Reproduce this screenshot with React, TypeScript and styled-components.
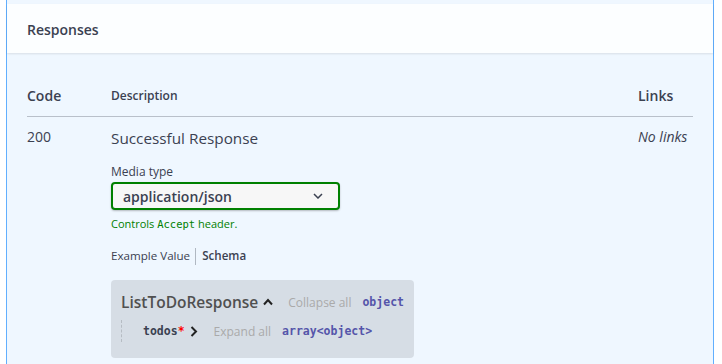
import styled, { createGlobalStyle } from 'styled-components';

const GlobalStyle = createGlobalStyle`
  html, body {
    margin: 0;
    padding: 0;
    background: #ffffff;
  }
  body {
    font-family: "Open Sans", "Noto Sans", sans-serif;
    color: #3b4151;
  }
`;

const mono = `"DejaVu Sans Mono", "Liberation Mono", monospace`;

const Page = styled.div`
  width: 722px;
  height: 364px;
  overflow: hidden;
`;

const Opblock = styled.section`
  margin: 0 8px 0 6px;
  padding-top: 4px;
  border-left: 1px solid #61affe;
  border-right: 1px solid #61affe;
  background: #eff7ff;
  min-height: 360px;
`;

const SectionHeader = styled.div`
  height: 49px;
  display: flex;
  align-items: center;
  padding: 0 20px;
  background: rgba(255, 255, 255, 0.8);
  box-shadow: 0 1px 2px rgba(0, 0, 0, 0.1);
`;

const SectionTitle = styled.h4`
  margin: 0;
  padding-top: 2px;
  font-size: 14px;
  font-weight: 600;
  color: #3b4151;
`;

const Inner = styled.div`
  padding: 0 20px;
`;

const Row = styled.div<{ $head?: boolean }>`
  display: grid;
  grid-template-columns: 84px 1fr 55px;
  align-items: ${(p) => (p.$head ? 'center' : 'start')};
  padding: ${(p) => (p.$head ? '33px 0 10px' : '10px 0 0')};
  border-bottom: ${(p) => (p.$head ? '1px solid rgba(59, 65, 81, 0.3)' : 'none')};
`;

const HeadCell = styled.div<{ $size: number }>`
  font-size: ${(p) => p.$size}px;
  line-height: 20px;
  font-weight: 600;
`;

const StatusCell = styled.div`
  font-size: 14px;
  line-height: 20px;
`;

const DescCol = styled.div`
  display: flex;
  flex-direction: column;
  align-items: flex-start;
`;

const DescText = styled.div`
  font-size: 15.3px;
  line-height: 22px;
`;

const NoLinks = styled.i`
  font-size: 14px;
  line-height: 20px;
  white-space: nowrap;
`;

const Label = styled.div`
  margin-top: 15px;
  font-size: 12px;
  line-height: 16px;
`;

const Select = styled.div`
  margin-top: 2px;
  box-sizing: border-box;
  width: 229px;
  height: 28px;
  display: flex;
  align-items: center;
  justify-content: space-between;
  padding: 0 15px 0 10px;
  border: 2px solid #008000;
  border-radius: 4px;
  background: #f7f7f7;
  box-shadow: 0 1px 2px rgba(0, 0, 0, 0.25);
  font-size: 14px;
  font-weight: 600;
`;

const AcceptMsg = styled.div`
  margin-top: 7px;
  font-size: 11px;
  line-height: 14px;
  color: #008000;
`;

const Code = styled.code`
  font-family: ${mono};
  font-size: 10.5px;
`;

const Tabs = styled.div`
  margin-top: 16px;
  display: flex;
  align-items: center;
  font-size: 11.6px;
  line-height: 18px;
`;

const Tab = styled.span<{ $active?: boolean }>`
  font-weight: ${(p) => (p.$active ? 600 : 400)};
`;

const TabDivider = styled.span`
  width: 1px;
  height: 17px;
  background: rgba(59, 65, 81, 0.35);
  margin: 0 6px 0 5px;
`;

const ModelBox = styled.div`
  margin-top: 15px;
  display: inline-flex;
  flex-direction: column;
  gap: 7px;
  padding: 11px 10px 16px;
  border-radius: 4px;
  background: rgba(0, 0, 0, 0.1);
`;

const ModelLine = styled.div`
  display: flex;
  align-items: center;
  white-space: nowrap;
  height: 22px;
`;

const PropLine = styled(ModelLine)`
  border-left: 1px dashed rgba(0, 0, 0, 0.15);
  padding-left: 21px;
`;

const ModelTitle = styled.span`
  font-size: 15.5px;
  font-weight: 600;
  color: #505050;
`;

const PropName = styled.span`
  font-family: ${mono};
  font-size: 11.5px;
  font-weight: 700;
  color: #3b4151;
`;

const Star = styled.span`
  color: #ff0000;
  font-family: ${mono};
  font-size: 11.5px;
  font-weight: 700;
`;

const Toggle = styled.span<{ $gap: number }>`
  display: inline-flex;
  margin: 0 ${(p) => p.$gap}px 0 5px;
`;

const Muted = styled.span`
  font-size: 12px;
  color: #aaaaaa;
`;

const PropType = styled.span`
  margin-left: 11px;
  font-family: ${mono};
  font-size: 11.5px;
  font-weight: 700;
  color: #55a;
`;

const Chevron = ({ dir }: { dir: 'up' | 'down' | 'right' }) => {
  if (dir === 'down') {
    return (
      <svg width="10" height="6" viewBox="0 0 10 6">
        <path d="M1 1 L5 5 L9 1" fill="none" stroke="#3b4151" strokeWidth="1.5" />
      </svg>
    );
  }
  if (dir === 'up') {
    return (
      <svg width="10" height="8" viewBox="0 0 10 8">
        <path d="M1 6.5 L5 2 L9 6.5" fill="none" stroke="#222" strokeWidth="2" />
      </svg>
    );
  }
  return (
    <svg width="8" height="11" viewBox="0 0 8 11">
      <path d="M1.5 1 L6 5.5 L1.5 10" fill="none" stroke="#222" strokeWidth="2" />
    </svg>
  );
};

const App = () => {
  return (
    <Page>
      <GlobalStyle />
      <Opblock>
        <SectionHeader>
          <SectionTitle>Responses</SectionTitle>
        </SectionHeader>
        <Inner>
          <Row $head>
            <HeadCell $size={14}>Code</HeadCell>
            <HeadCell $size={12}>Description</HeadCell>
            <HeadCell $size={14}>Links</HeadCell>
          </Row>
          <Row>
            <StatusCell>200</StatusCell>
            <DescCol>
              <DescText>Successful Response</DescText>
              <Label>Media type</Label>
              <Select>
                <span>application/json</span>
                <Chevron dir="down" />
              </Select>
              <AcceptMsg>
                Controls <Code>Accept</Code> header.
              </AcceptMsg>
              <Tabs>
                <Tab>Example Value</Tab>
                <TabDivider />
                <Tab $active>Schema</Tab>
              </Tabs>
              <ModelBox>
                <ModelLine>
                  <ModelTitle>ListToDoResponse</ModelTitle>
                  <Toggle $gap={15}>
                    <Chevron dir="up" />
                  </Toggle>
                  <Muted>Collapse all</Muted>
                  <PropType>object</PropType>
                </ModelLine>
                <PropLine>
                  <PropName>todos</PropName>
                  <Star>*</Star>
                  <Toggle $gap={16}>
                    <Chevron dir="right" />
                  </Toggle>
                  <Muted>Expand all</Muted>
                  <PropType>array&lt;object&gt;</PropType>
                </PropLine>
              </ModelBox>
            </DescCol>
            <NoLinks>No links</NoLinks>
          </Row>
        </Inner>
      </Opblock>
    </Page>
  );
};

export default App;
